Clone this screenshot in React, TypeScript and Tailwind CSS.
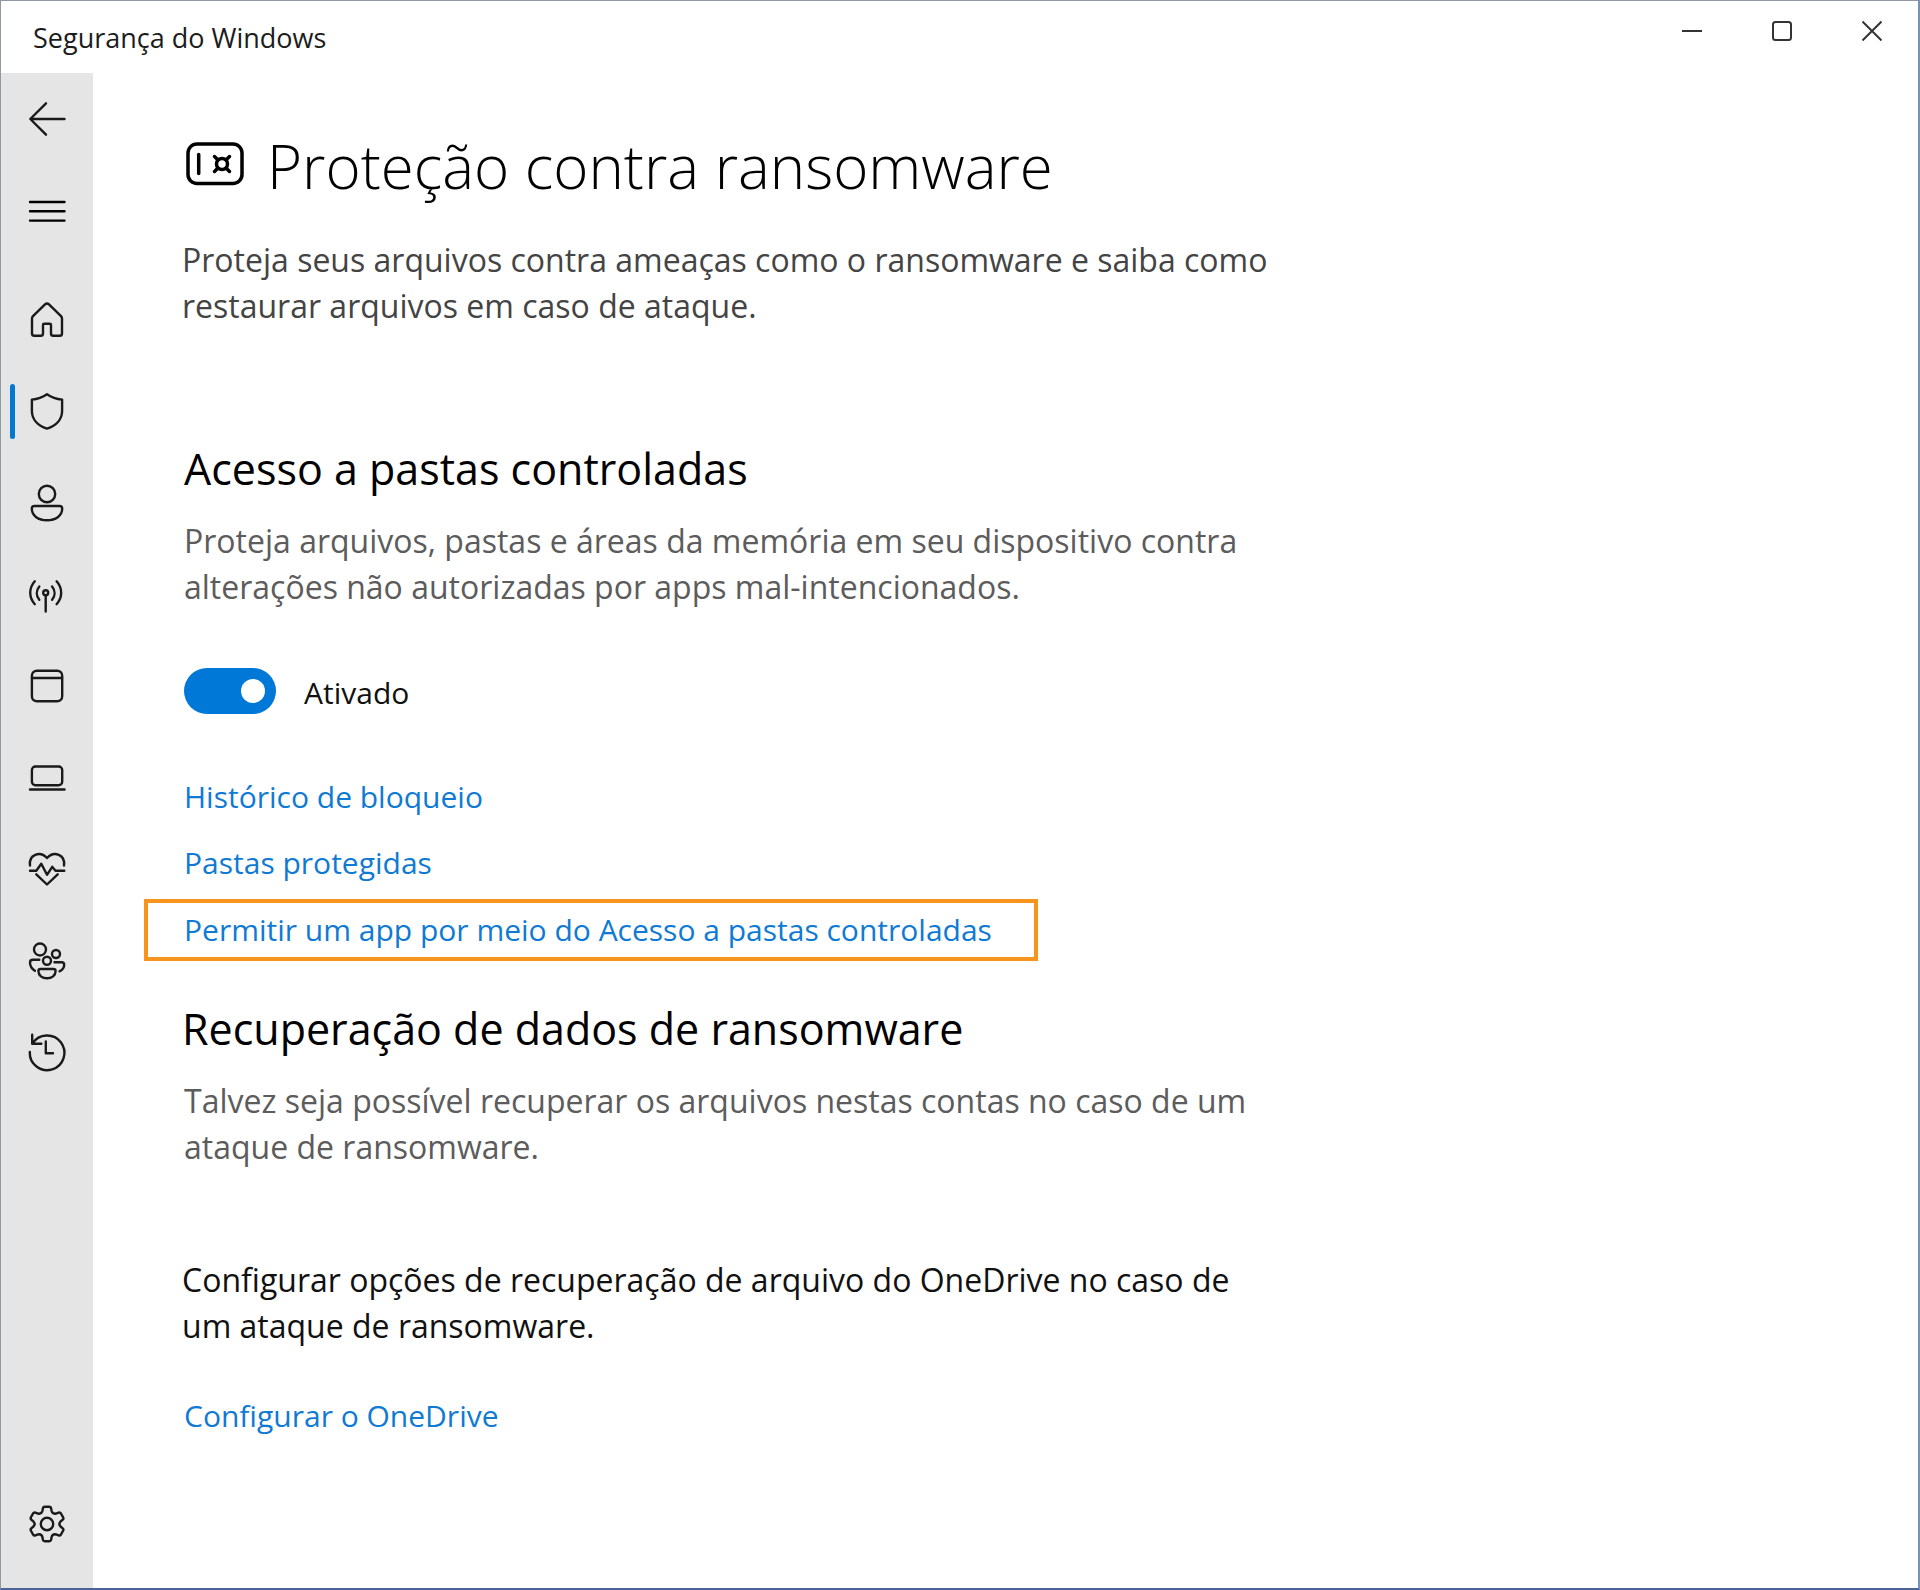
import React from 'react';

type IconProps = { children: React.ReactNode };

const Icon: React.FC<IconProps> = ({ children }) => (
    <svg
        className="w-9 h-9 overflow-visible"
        viewBox="0 0 36 36"
        fill="none"
        stroke="currentColor"
        strokeWidth="2.4"
        strokeLinecap="round"
        strokeLinejoin="round"
        aria-hidden="true"
    >
        {children}
    </svg>
);

// One tooth of the settings gear, repeated every 60 degrees around the centre
const gearPath = (() => {
    const spin = (x: number, y: number, step: number) => {
        const a = (step * Math.PI) / 3;
        const px = 18 + x * Math.cos(a) - y * Math.sin(a);
        const py = 18 + x * Math.sin(a) + y * Math.cos(a);
        return `${px.toFixed(2)} ${py.toFixed(2)}`;
    };
    let d = '';
    for (let i = 0; i < 6; i++) {
        d += `${i === 0 ? 'M' : 'L'}${spin(-4.6, -13, i)}`;
        d += `L${spin(-4.1, -15.8, i)}Q${spin(-3.8, -17.3, i)} ${spin(-2.2, -17.3, i)}`;
        d += `L${spin(2.2, -17.3, i)}Q${spin(3.8, -17.3, i)} ${spin(4.1, -15.8, i)}`;
        d += `L${spin(4.6, -13, i)}Q${spin(5.6, -9.7, i)} ${spin(-4.6, -13, i + 1)}`;
    }
    return `${d}Z`;
})();

const sections = [
    {
        label: 'Início',
        icon: <path d="M3 16.5c0-1 .3-1.6 1-2.3L16 2.4c1.3-1.2 2.7-1.2 4 0l12 11.8c.7.7 1 1.3 1 2.3V31.5c0 1.5-.8 2.3-2.3 2.3H24.3c-1.5 0-2.3-.8-2.3-2.3V23c0-.8-.4-1.2-1.2-1.2H15.2c-.8 0-1.2.4-1.2 1.2v8.5c0 1.5-.8 2.3-2.3 2.3H5.3C3.8 33.8 3 33 3 31.5Z" />,
    },
    {
        label: 'Proteção contra vírus e ameaças',
        active: true,
        icon: <path d="M18 1.2C13.5 4.3 8.5 6 2.9 6.6V18C2.9 26 8.5 32.5 18 35.6 27.5 32.5 33.1 26 33.1 18V6.6C27.5 6 22.5 4.3 18 1.2Z" />,
    },
    {
        label: 'Proteção de conta',
        icon: (
            <>
                <circle cx="18" cy="9" r="8.2" />
                <path d="M5.5 21h25c1.7 0 2.7 1 2.7 2.6C33.2 31 26.5 35.2 18 35.2S2.8 31 2.8 23.6C2.8 22 3.8 21 5.5 21Z" />
            </>
        ),
    },
    {
        label: 'Firewall e proteção de rede',
        icon: (
            <>
                <circle cx="16.7" cy="16.7" r="2.5" />
                <path d="M16.7 19.5V35.5M5.8 5.3C-.3 12-.3 21.5 5.8 28.2M27.6 5.3c6.1 6.7 6.1 16.2 0 22.9M10.3 10.5c-3.3 4-3.3 9.3 0 13.3M23.1 10.5c3.3 4 3.3 9.3 0 13.3" />
            </>
        ),
    },
    {
        label: 'Controle de aplicativos e do navegador',
        icon: (
            <>
                <rect x="2.9" y="2.7" width="30.3" height="30.6" rx="5" />
                <path d="M3 10H33" />
            </>
        ),
    },
    {
        label: 'Segurança do dispositivo',
        icon: (
            <>
                <rect x="2.9" y="6.5" width="30.3" height="18.7" rx="3.5" />
                <path d="M1 29.5H35.5" />
            </>
        ),
    },
    {
        label: 'Desempenho e integridade do dispositivo',
        icon: (
            <path d="M1 14.5C-.5 3.5 11-.5 18 7 25-.5 36.5 3.5 35 14.5M1 19.7H7.3L12.3 12.7 18 23.8 23.2 15.8 26.5 19.7H35.3M7.3 23.3 18 33.5 28.7 23.3" />
        ),
    },
    {
        label: 'Opções da família',
        icon: (
            <>
                <circle cx="11" cy="6.5" r="6" />
                <circle cx="27" cy="11" r="4" />
                <circle cx="18" cy="17.8" r="4" />
                <path d="M11.5 26h13c1.3 0 2.1.8 2.1 2C26.6 32.5 22.8 35.3 18 35.3S9.4 32.5 9.4 28c0-1.2.8-2 2.1-2ZM10.3 16.8H3.8C2 16.8 1 17.8 1 19.5c0 3.5 1.7 6.3 4.9 8.3M25.5 19.3h7c1.7 0 2.7.9 2.7 2.5 0 3-1.7 5.2-4.7 6.5" />
            </>
        ),
    },
    {
        label: 'Histórico de proteção',
        icon: <path d="M.8 18A17.3 17.3 0 1 0 3.5 9.5M3.2.8V9.7H12.4M16.8 7.5V19.3H24" />,
    },
];

const TitleBar: React.FC = () => (
    <header className="flex justify-between h-18 shrink-0">
        <span className="pl-8 pt-[15px] text-[27px] leading-11 text-[#1c1c1c]">Segurança do Windows</span>
        <div className="flex pr-px text-[#333333]">
            <button type="button" aria-label="Minimizar" className="flex items-center justify-center w-[90px] h-[60px]">
                <svg className="w-5 h-5" viewBox="0 0 20 20" fill="none" stroke="currentColor" strokeWidth="2">
                    <path d="M0 10H20" />
                </svg>
            </button>
            <button type="button" aria-label="Maximizar" className="flex items-center justify-center w-[90px] h-[60px]">
                <svg className="w-5 h-5" viewBox="0 0 20 20" fill="none" stroke="currentColor" strokeWidth="2">
                    <rect x="1" y="1" width="18" height="18" rx="2.5" />
                </svg>
            </button>
            <button type="button" aria-label="Fechar" className="flex items-center justify-center w-[90px] h-[60px]">
                <svg className="w-5 h-5" viewBox="0 0 20 20" fill="none" stroke="currentColor" strokeWidth="2">
                    <path d="M.5.5 19.5 19.5M19.5.5.5 19.5" />
                </svg>
            </button>
        </div>
    </header>
);

const Sidebar: React.FC = () => (
    <aside className="flex flex-col w-[92px] shrink-0 bg-[#e5e5e5] text-[#1a1a1a]">
        <button type="button" aria-label="Voltar" className="flex items-center justify-center h-[92px]">
            <Icon>
                <path d="M35.5 18H1.5M17 2.3 1.3 18 17 33.7" />
            </Icon>
        </button>
        <button type="button" aria-label="Abrir navegação" className="flex items-center justify-center h-[92px] text-black">
            <Icon>
                <path d="M1 9H35.5M1 18.3H35.5M1 27.6H35.5" />
            </Icon>
        </button>
        <nav className="flex flex-col h-[824px] mt-[17px]">
            {sections.map((s) => (
                <a key={s.label} href="#" aria-label={s.label} className="relative flex flex-1 items-center justify-center">
                    {s.active && <span className="absolute left-[9px] w-[5px] h-[55px] rounded-full bg-[#0078d4]" />}
                    <Icon>{s.icon}</Icon>
                </a>
            ))}
        </nav>
        <button type="button" aria-label="Configurações" className="flex items-center justify-center h-[92px] mt-auto mb-[18px]">
            <Icon>
                <path d={gearPath} />
                <circle cx="18" cy="18" r="6.2" />
            </Icon>
        </button>
    </aside>
);

export default function App() {
    return (
        <div className="flex flex-col min-h-screen bg-white border border-r-2 border-b-2 border-[#8f98a3] border-r-[#7093c0] border-b-[#4f6296] font-['Segoe_UI','Open_Sans','Noto_Sans',sans-serif] text-[32px] leading-[46px] text-[#111111]">
            <TitleBar />
            <div className="flex flex-1">
                <Sidebar />
                <main className="flex-1 pl-[89px] pt-[53px] pb-24">
                    <div className="flex items-center gap-[23px] pl-1">
                        <svg
                            className="w-[58px] h-11 mb-1 shrink-0"
                            viewBox="0 0 58 44"
                            fill="none"
                            stroke="#000000"
                            strokeWidth="3.5"
                            strokeLinecap="round"
                            aria-hidden="true"
                        >
                            <rect x="2" y="2" width="54" height="39.5" rx="9" />
                            <path d="M12.7 12.5V31.5" />
                            <circle cx="36" cy="22" r="5.5" />
                            <path d="M32 18 28.5 14.5M40 18 43.5 14.5M32 26 28.5 29.5M40 26 43.5 29.5" />
                        </svg>
                        <h1 className="text-[60px] leading-[80px] font-light text-black">Proteção contra ransomware</h1>
                    </div>
                    <p className="max-w-[1096px] mt-[31px] text-[#444444]">
                        Proteja seus arquivos contra ameaças como o ransomware e saiba como restaurar arquivos em caso de ataque.
                    </p>

                    <section className="mt-[110px] pl-0.5">
                        <h2 className="text-[43px] leading-[60px] text-black">Acesso a pastas controladas</h2>
                        <p className="max-w-[1096px] mt-[19px] text-[#5c5c5c]">
                            Proteja arquivos, pastas e áreas da memória em seu dispositivo contra alterações não autorizadas por apps mal-intencionados.
                        </p>
                        <label className="flex items-center gap-7 w-fit mt-14">
                            <span className="relative flex">
                                <input
                                    type="checkbox"
                                    role="switch"
                                    defaultChecked
                                    className="peer appearance-none w-[92px] h-[46px] rounded-full bg-[#8a8a8a] checked:bg-[#0078d7]"
                                />
                                <span className="absolute top-[11px] left-[11px] w-6 h-6 rounded-full bg-white peer-checked:left-[57px]" />
                            </span>
                            <span className="pt-1 text-[30px]">Ativado</span>
                        </label>
                        <div className="flex flex-col items-start mt-[58px] text-[30px] text-[#0f7ad4]">
                            <a href="#" className="mb-5">Histórico de bloqueio</a>
                            <a href="#">Pastas protegidas</a>
                            <a href="#" className="-ml-10 mt-[13px] pl-9 pr-[42px] py-[7px] border-4 border-[#f7941d] leading-10 whitespace-nowrap">
                                Permitir um app por meio do Acesso a pastas controladas
                            </a>
                        </div>
                    </section>

                    <section className="mt-[38px]">
                        <h2 className="text-[43px] leading-[60px] text-black">Recuperação de dados de ransomware</h2>
                        <p className="max-w-[1096px] mt-[19px] pl-0.5 text-[#5c5c5c]">
                            Talvez seja possível recuperar os arquivos nestas contas no caso de um ataque de ransomware.
                        </p>
                        <p className="max-w-[1096px] mt-[87px]">
                            Configurar opções de recuperação de arquivo do OneDrive no caso de um ataque de ransomware.
                        </p>
                        <a href="#" className="inline-block mt-11 ml-0.5 text-[30px] text-[#0f7ad4]">Configurar o OneDrive</a>
                    </section>
                </main>
            </div>
        </div>
    );
}
